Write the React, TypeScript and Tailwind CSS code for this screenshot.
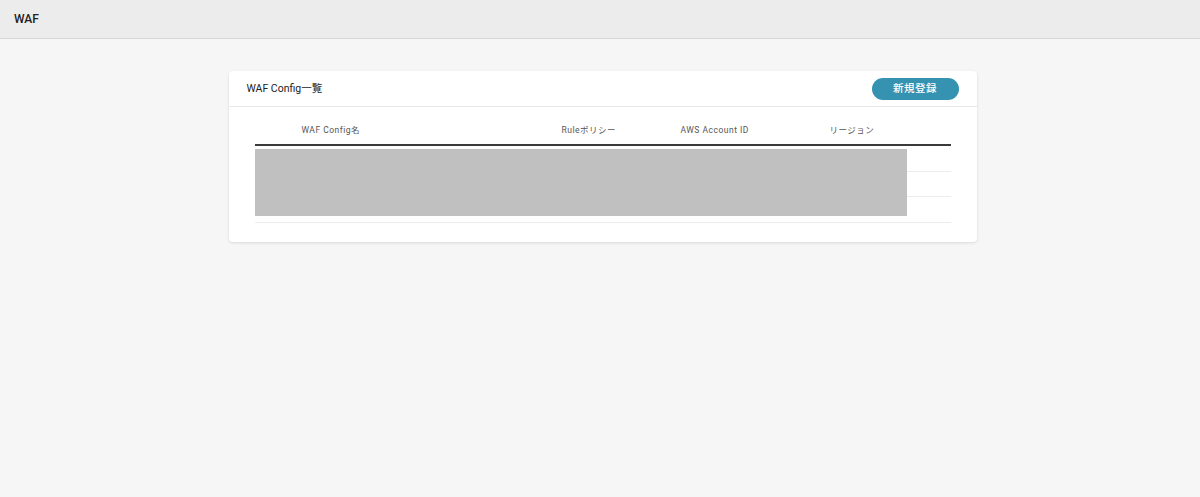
import React from "react";

const font = { fontFamily: 'Roboto, "Noto Sans CJK JP", sans-serif' };

export default function App() {
  const rows = [0, 1, 2];
  return (
    <div className="min-h-[497px] w-full bg-[#f6f6f6] text-[#222]" style={font}>
      <header className="h-[39px] bg-[#ececec] border-b border-[#d6d6d6] flex items-center px-[14px]">
        <span className="text-[12px] font-medium text-[#222]">WAF</span>
      </header>
      <main className="flex justify-center pt-[32px]">
        <section className="w-[748px] ml-[5px] bg-white rounded-[4px] shadow-[0_1px_3px_rgba(0,0,0,0.12)]">
          <div className="h-[36px] flex items-center justify-between pl-[18px] pr-[18px] border-b border-[#e8e8e8]">
            <h1 className="text-[10.5px] text-[#222] font-normal">WAF Config一覧</h1>
            <button className="w-[87px] h-[22px] rounded-full bg-[#3592b0] text-white text-[10.5px] font-medium tracking-[0.5px] flex items-center justify-center">
              新規登録
            </button>
          </div>
          <div className="px-[26px] pt-[10px] pb-[19px]">
            <div className="relative w-[696px]">
              <div className="grid grid-cols-[47px_260px_119px_149px_1fr] h-[29px] items-center border-b-2 border-[#3a3a3a] text-[8.5px] font-normal tracking-[0.5px] text-[#555]">
                <span />
                <span>WAF Config名</span>
                <span>Ruleポリシー</span>
                <span>AWS Account ID</span>
                <span>リージョン</span>
              </div>
              {rows.map((r) => (
                <div key={r} className="h-[25.5px] border-b border-[#ececec]" />
              ))}
              <div className="absolute left-0 top-[32px] w-[652px] h-[67px] bg-[#c0c0c0]" />
            </div>
          </div>
        </section>
      </main>
    </div>
  );
}
